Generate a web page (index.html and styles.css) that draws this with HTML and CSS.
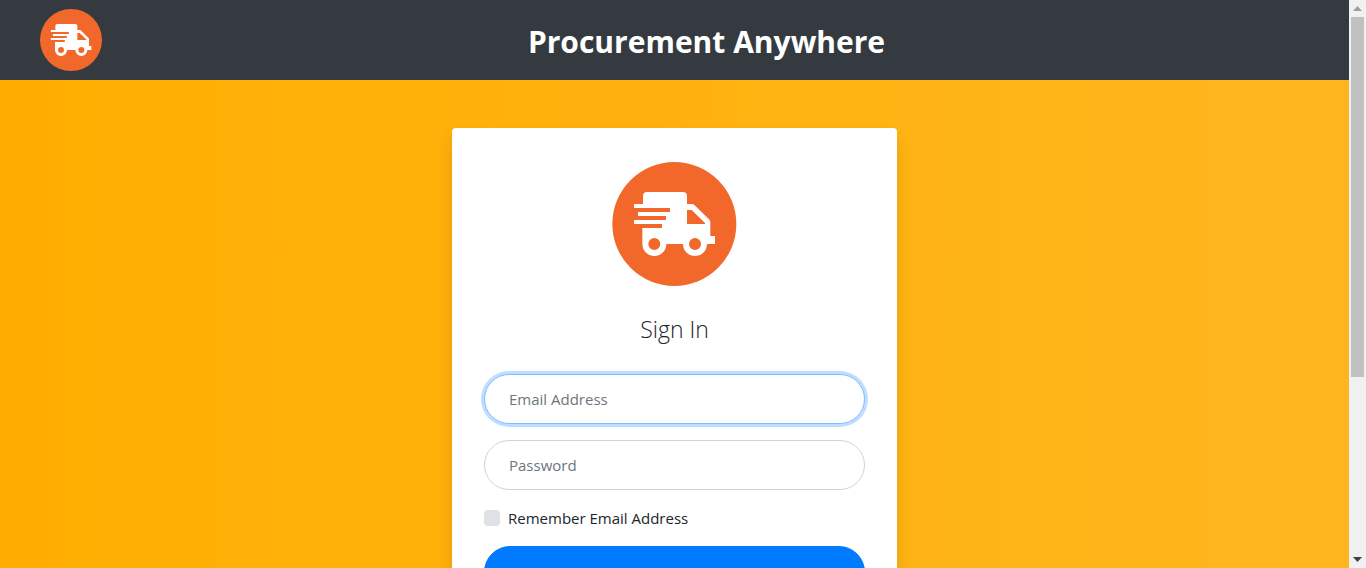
FILE: index.html
```html
<!DOCTYPE html>
<html lang="en">
<head>
<meta charset="utf-8">
<meta name="viewport" content="width=device-width, initial-scale=1">
<title>Procurement Anywhere</title>
<link rel="stylesheet" href="styles.css">
</head>
<body>
<div class="window">
  <div class="page">
    <header class="navbar">
      <a class="brand" href="#" aria-label="Home">
        <svg class="brand-logo" viewBox="31 30 384 384" aria-hidden="true">
          <circle cx="223" cy="222" r="186" fill="#f2682a"/>
          <path id="truck" fill="#fff" fill-rule="evenodd" d="M129 162V138Q129 126 141 126H249Q261 126 261 138V162H275Q280 162 284 166L327 208Q331 212 331 217V258H345V282H321A36 36 0 0 1 249 282H199A36 36 0 0 1 127 282V234H186V222H102V210H198V198H114V186H210V174H102V162ZM261 180V222H315V219L275 180ZM163 264A18 18 0 1 0 163 300A18 18 0 1 0 163 264ZM285 264A18 18 0 1 0 285 300A18 18 0 1 0 285 264Z"/>
        </svg>
      </a>
      <h1 class="title">Procurement Anywhere</h1>
    </header>
    <main class="main">
      <section class="card">
        <svg class="card-logo" viewBox="33 30 384 384" aria-hidden="true">
          <circle cx="223" cy="222" r="186" fill="#f2682a"/>
          <use href="#truck"/>
        </svg>
        <h2 class="card-title">Sign In</h2>
        <form class="form">
          <input class="field" type="email" placeholder="Email Address" aria-label="Email Address" autofocus>
          <input class="field" type="password" placeholder="Password" aria-label="Password">
          <div class="remember">
            <input class="check" type="checkbox" id="remember">
            <label for="remember">Remember Email Address</label>
          </div>
          <button class="submit" type="submit" aria-label="Sign in"></button>
        </form>
      </section>
    </main>
  </div>
  <div class="scrollbar" aria-hidden="true">
    <svg class="arrow" viewBox="0 0 17 17"><path d="M4 11L8.500 6L13 11Z" fill="#a09da0"/></svg>
    <div class="track"><div class="thumb"></div></div>
    <svg class="arrow" viewBox="0 0 17 17"><path d="M4 6L8.500 11L13 6Z" fill="#404040"/></svg>
  </div>
</div>
</body>
</html>
```
FILE: styles.css
```css
* { box-sizing: border-box; }

body {
  margin: 0;
  font-family: "Open Sans", "Noto Sans", sans-serif;
  font-size: 15px;
  line-height: 24px;
  color: #212529;
}

.window {
  display: flex;
  height: 100vh;
}

.page {
  flex: 1;
  min-width: 0;
  overflow-y: auto;
  scrollbar-width: none;
  background: linear-gradient(to right, #ffae00, #ffb61e);
}

.navbar {
  display: flex;
  align-items: center;
  padding: 8px 39px;
  background: #343a40;
}

.brand,
.brand-logo { display: block; }

.brand-logo { width: 64px; }

.title {
  flex: 1;
  margin: 0;
  padding-top: 4px;
  font-size: 30px;
  line-height: 40px;
  font-weight: 700;
  text-align: center;
  color: #fff;
}

.main { padding: 48px 16px; }

.card {
  max-width: 445px;
  margin: 0 auto;
  padding: 32px;
  border-radius: 4px;
  background: #fff;
  box-shadow: 0 8px 16px rgba(0, 0, 0, 0.1);
}

.card-logo {
  display: block;
  width: 128px;
  margin: 0 auto;
}

.card-title {
  margin: 24px 0 28px;
  font-size: 23px;
  line-height: 34px;
  font-weight: 300;
  text-align: center;
}

.form {
  display: flex;
  flex-direction: column;
  gap: 16px;
}

.field {
  width: 100%;
  height: 50px;
  padding: 12px 24px;
  border: 1px solid #ced4da;
  border-radius: 32px;
  outline: 0;
  font: inherit;
  color: #495057;
  background: #fff;
}

.field::placeholder {
  color: #6c757d;
  opacity: 1;
}

.field:focus {
  border-color: #80bdff;
  box-shadow: 0 0 0 3px rgba(0, 123, 255, 0.25);
}

.remember {
  display: flex;
  align-items: center;
  gap: 8px;
}

.check {
  appearance: none;
  width: 16px;
  height: 16px;
  margin: 0;
  border-radius: 4px;
  background: #dee2e6;
}

.check:checked { background: #007bff; }

.submit {
  height: 52px;
  border: 1px solid #007bff;
  border-radius: 80px;
  background: #007bff;
}

.scrollbar {
  display: flex;
  flex-direction: column;
  width: 17px;
  background: #f1f1f1;
}

.arrow {
  display: block;
  height: 17px;
}

.track {
  flex: 1;
  padding: 0 2px;
}

.thumb {
  height: 67.5%;
  background: #c1c1c1;
}
```
